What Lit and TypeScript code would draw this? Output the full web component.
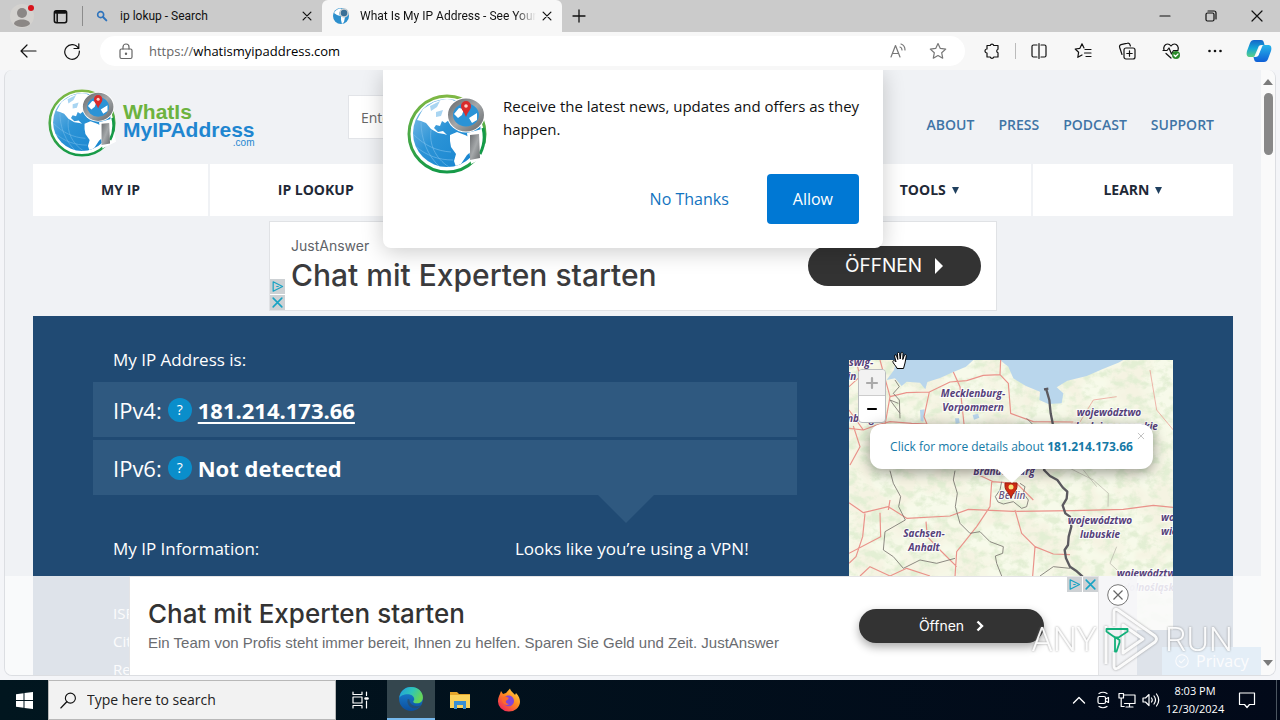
import { LitElement, html, svg, css } from "lit";
import { customElement } from "lit/decorators.js";

const icon = (body: unknown, size = 18, box = 18) =>
  html`<svg class="icon" width=${size} height=${size} viewBox="0 0 ${box} ${box}" aria-hidden="true">${body}</svg>`;

const globe = (size: number) => html`
  <svg class="globe" width=${size} height=${size} viewBox="0 0 80 80" role="img" aria-label="Globe logo">
    <defs>
      <linearGradient id="ring" x1="0" y1="0" x2="0" y2="1">
        <stop offset="0" stop-color="#7fb845" /><stop offset="1" stop-color="#159a48" />
      </linearGradient>
      <linearGradient id="sea" x1="0" y1="0" x2="1" y2="1">
        <stop offset="0" stop-color="#8cc4ea" /><stop offset=".45" stop-color="#2b93d6" /><stop offset="1" stop-color="#1583cf" />
      </linearGradient>
      <linearGradient id="steel" x1="0" y1="0" x2="1" y2="1">
        <stop offset="0" stop-color="#6c6f72" /><stop offset=".5" stop-color="#a5a8aa" /><stop offset="1" stop-color="#6b6e70" />
      </linearGradient>
      <clipPath id="ball"><circle cx="40" cy="39" r="34" /></clipPath>
    </defs>
    <circle cx="40" cy="40" r="38" fill="#fff" stroke="url(#ring)" stroke-width="3" />
    <circle cx="40" cy="39" r="34" fill="url(#sea)" />
    <g clip-path="url(#ball)">
      <path fill="#fff" d="M10 26 16 15 27 8 41 4 50 8 46 16 41 19 42 26 38 29 35 27 33 32 29 31 27 34 31 38 36 37 40 41 37 40 31 39 24 35 19 29 14 27Z" />
      <path fill="#a9d5f2" d="M23 12 33 7 30 13 24 17ZM29 18l7-2-2 6-5 1Z" />
      <path fill="#fff" d="M43 41 50 38 58 41 68 46 66 56 60 61 54 70 49 73 47 67 49 60 44 53 43 47Z" />
      <path fill="none" stroke="#7cc0ec" stroke-width=".6" d="M6 40C18 52 30 57 44 58M8 52C20 62 32 66 46 66M14 28C14 44 20 62 34 74M24 36C22 50 28 64 42 73" />
    </g>
    <path d="M60 39 75 35 80 62 64 70Z" fill="#fff" />
    <path d="M76 34A37 37 0 0 1 73 60" fill="none" stroke="#159a48" stroke-width="3" />
    <path d="M63 41 72 40 73 64 63 66Z" fill="url(#steel)" />
    <ellipse cx="59" cy="21" rx="19" ry="17.500" fill="#fff" />
    <ellipse cx="59" cy="21" rx="15.500" ry="14" fill="#2b93d6" stroke="url(#steel)" stroke-width="5" />
    <path d="M47 20 52 14 57 15 55 21 51 24ZM62 24 70 19 70 26 65 29Z" fill="#fff" />
    <path d="M59 23C57 17 54 16 54 12A5 5 0 0 1 64 12C64 16 61 17 59 23Z" fill="#d92b2b" />
    <circle cx="59" cy="12" r="1.800" fill="#ffd0c8" />
  </svg>`;

const map = html`
  <svg class="tiles" viewBox="0 0 324 270" preserveAspectRatio="xMinYMin slice" aria-label="Map of the Berlin region" role="img">
    <defs>
      <filter id="woods" x="0" y="0" width="100%" height="100%">
        <feTurbulence type="fractalNoise" baseFrequency="0.09 0.11" numOctaves="5" seed="11" />
        <feColorMatrix values="0 0 0 0 .77  0 0 0 0 .86  0 0 0 0 .66  3.600 0 0 0 -1.600" />
      </filter>
      <filter id="fields" x="0" y="0" width="100%" height="100%">
        <feTurbulence type="fractalNoise" baseFrequency="0.03" numOctaves="3" seed="4" />
        <feColorMatrix values="0 0 0 0 .93  0 0 0 0 .96  0 0 0 0 .82  4 0 0 0 -1.500" />
      </filter>
    </defs>
    <rect width="324" height="270" fill="#f5f3e2" />
    <rect width="324" height="270" filter="url(#fields)" />
    <rect width="324" height="270" filter="url(#woods)" />
    <g transform="scale(.33333) translate(-27 -30)" fill="none" stroke-linejoin="round">
      <path fill="#b9d6ec" d="M170 30 162 60 140 90 165 85 185 108 200 95 240 98 256 118 262 96 300 84 340 66 378 50 400 30ZM480 30 505 50 520 85 558 108 600 125 598 150 625 162 665 160 670 130 650 112 682 92 740 78 790 56 835 38 850 30Z" />
      <path fill="#b9d6ec" d="M240 180 254 178 250 215 242 212ZM398 195l16-4 4 12-16 6ZM345 205l12 0 2 14-12 2Z" />
      <g stroke="#ea928a" stroke-width="3.500">
        <path d="M27 110 60 80 48 30M27 235 70 240 110 225 150 215 215 220 260 222M40 228 60 290 30 345M70 240 27 180M120 30 150 140 135 225M150 140 200 128 268 126 330 96 380 92 430 76 480 74 505 100 512 190 580 215 700 216M268 126 252 200 262 225M340 66 360 110 372 222M480 74 482 30" />
        <path d="M27 458 70 488 145 470 200 505 330 498 385 478 520 484 700 482 850 478 940 466 1000 472M75 490 68 560 48 620 27 640M120 488 122 560 27 610M150 450 145 480M455 395 450 470 410 530 350 605 345 680M455 395 530 400 580 450M410 372 460 395M525 480 545 550 585 590 578 678M585 590 640 612 690 614M258 515 262 560 300 600 350 650M60 678 90 650 150 678 200 655 270 678" />
        <path d="M1000 240 950 180 930 60M660 230 720 216 760 150 830 140" stroke-width="2" />
      </g>
      <g stroke="#77746e" stroke-width="2.500">
        <path d="M150 362 160 400 182 440 176 470 196 510 135 545 130 600 160 620 190 655 240 630 290 640 345 625M345 362 340 390 352 430 346 470 360 520 390 550 420 545 450 575 490 590 488 610 466 618 470 640 485 678M165 90 178 110 160 130 178 150 180 205M485 395 480 420 466 440 474 456 490 462 520 455 545 475 560 470 565 450 550 430 555 410 540 400M600 678 640 650 690 655M560 205 590 235M175 160 150 150 180 190" />
        <path d="M680 350 760 390 805 430 804 470M730 360 770 410M850 678 810 640 830 590" stroke="#b5b2a7" stroke-width="2" />
      </g>
      <path stroke="#5c5a60" stroke-width="7" d="M612 118 625 116M618 115 628 150 632 190 638 220 640 300 612 360 630 378 652 390 668 412 682 425 680 446 668 466 676 490 690 500 694 530 686 560 684 585 674 600 678 625 690 650 708 662 728 680" />
    </g>
    <g class="place">
      <text x="0" y="6" text-anchor="start">swig-</text>
      <text x="-32" y="20" text-anchor="start">Holstein</text>
      <text x="-18" y="62" text-anchor="start">Hamburg</text>
      <text x="124" y="37">Mecklenburg-</text><text x="124" y="51">Vorpommern</text>
      <text x="260" y="56">województwo</text><text x="260" y="70">zachodniopomorskie</text>
      <text x="155" y="115">Brandenburg</text>
      <text x="251" y="164">województwo</text><text x="251" y="178">lubuskie</text>
      <text x="75" y="177">Sachsen-</text><text x="75" y="191">Anhalt</text>
      <text x="312" y="161" text-anchor="start">województwo</text><text x="312" y="175" text-anchor="start">wielkopolskie</text>
      <text x="300" y="217">województwo</text><text x="304" y="231">dolnośląskie</text>
      <text x="163" y="139" class="city">Berlin</text>
    </g>
    <path d="M162 138C160 132 156 131 156 126V123H168V126C168 131 164 132 162 138Z" fill="#cf2b12" stroke="#9d1f10" />
    <circle cx="162" cy="127" r="2.500" fill="#f8e27c" />
  </svg>`;

@customElement("app-root")
export class AppRoot extends LitElement {
  static styles = css`
    :host { display: flex; flex-direction: column; height: 100vh; overflow: hidden; background: #f4f5f8; font: 14px/20px "Open Sans", sans-serif; color: #111; }
    * { box-sizing: border-box; }
    button, input { font: inherit; color: inherit; border: 0; margin: 0; padding: 0; background: none; }
    a { color: inherit; text-decoration: none; }
    h1, h2, p { margin: 0; font-weight: 400; }
    svg { display: block; flex: none; }
    .icon { fill: none; stroke: currentColor; stroke-width: 1.200; stroke-linecap: round; stroke-linejoin: round; }
    .center { display: grid; place-items: center; }

    .tabs { display: flex; align-items: stretch; height: 32px; flex: none; background: #cbcbcb; }
    .avatar { width: 44px; }
    .spaces { width: 32px; }
    .rule { width: 1px; background: #8c8c8c; }
    .tabs .rule { margin: 6px 3px 6px 6px; }
    .tab { display: flex; align-items: center; gap: 10px; padding: 0 8px 0 10px; font: 12px/16px Roboto, sans-serif; }
    .tab.idle { width: 236px; gap: 12px; }
    .tab.live { width: 240px; background: #f7f7f7; border-radius: 6px 6px 0 0; }
    .title { flex: 1; overflow: hidden; white-space: nowrap; text-align: left; }
    .live .title { margin-right: -6px; -webkit-mask-image: linear-gradient(90deg, #000 88%, transparent); }
    .plus { width: 34px; }
    .win { width: 46px; }
    .push { margin-left: auto; }

    .bar { display: flex; align-items: center; height: 38px; flex: none; background: #f7f7f7; padding-left: 6px; }
    .tool { width: 44px; height: 32px; flex: none; }
    .tool.last { width: 43px; }
    .bar .rule { height: 16px; background: #bbb; margin: 0 1px; }
    .omni { flex: 1; height: 30px; margin: 0 5px 0 6px; display: flex; align-items: center; background: #fff; border-radius: 15px; padding: 0 18px 0 17px; gap: 14px; color: #666; font-size: 13px; }
    .url { flex: 1; }
    .url b { font-weight: 400; color: #000; }
    .marks { display: flex; gap: 22px; color: #777; }

    .frame { position: relative; flex: 1; min-height: 0; margin: 0 4px 4px 4px; display: flex; border: 1px solid #dcdee2; border-top: 0; border-radius: 8px; overflow: hidden; background: #f0f2f5; }
    .page { position: relative; flex: 1; overflow: hidden; }
    .scroll { width: 14px; background: #fafafa; display: flex; flex-direction: column; align-items: center; padding: 9px 0; color: #7b7b7b; }
    .thumb { width: 9px; height: 62px; border-radius: 5px; background: #888; margin-top: 8px; }
    .down { margin-top: auto; }

    .wrap { max-width: 1200px; margin: 0 auto; }
    .head { display: flex; align-items: center; height: 94px; padding: 0 19px 0 15px; }
    .brand { display: flex; align-items: center; gap: 7px; width: 300px; margin-top: 12px; }
    .word { font: bold 21px/18px "Liberation Sans", sans-serif; color: #1f86d0; padding-top: 4px; }
    .word span { display: block; }
    .word .green { color: #6cb33f; }
    .word .dot { font-size: 10px; line-height: 8px; text-align: right; font-weight: 400; }
    .find { width: 300px; height: 44px; background: #fff; border: 1px solid #e2e4e8; padding: 0 12px; }
    .find::placeholder { color: #666; opacity: 1; }
    .links { margin-left: auto; display: flex; gap: 24px; font-weight: 600; color: #3f74a6; padding-top: 16px; }
    .menu { display: grid; grid-template-columns: 175fr 211fr 402fr 203fr 200fr; gap: 2px; }
    .menu > * { background: #fff; height: 52px; display: flex; align-items: center; justify-content: center; gap: 6px; font-weight: 700; color: #1f2937; }
    .menu svg { color: #20405f; }

    .lead { position: relative; width: 728px; height: 90px; margin: 5px auto; background: #fff; border: 1px solid #e0e2e5; display: flex; align-items: center; justify-content: space-between; padding: 0 15px 0 21px; color: #3c4043; font-family: Inter, sans-serif; }
    .lead p { line-height: 18px; font-size: 14px; color: #5f6368; }
    .lead h2 { font-size: 30px; line-height: 40px; font-weight: 500; color: #3b3b3d; }
    .lead .go { width: 173px; height: 40px; font-size: 19px; gap: 12px; }
    .go { display: flex; align-items: center; justify-content: center; border-radius: 26px; background: #333; color: #fff; }
    .chips { position: absolute; display: flex; gap: 1px; }
    .chips span { width: 15px; height: 15px; background: #cdd1d4; color: #18a3c4; display: grid; place-items: center; }
    .lead .chips { left: 0; bottom: 0; flex-direction: column; }

    .hero { background: #204a73; color: #fff; display: grid; grid-template-columns: 1fr 324px; gap: 52px; padding: 32px 60px 60px; }
    .label { font-size: 17px; line-height: 24px; padding-left: 20px; }
    .rows { position: relative; display: grid; gap: 3px; margin: 10px 0 42px; }
    .row { display: flex; align-items: center; height: 55px; padding-left: 20px; gap: 6px; background: #2f5980; font-size: 22px; line-height: 30px; }
    .row b { font-weight: 700; }
    .row a { text-decoration: underline; text-decoration-thickness: 2px; text-underline-offset: 3px; }
    .tip { width: 24px; height: 24px; border-radius: 50%; background: #0a8ecb; font-size: 14px; line-height: 24px; }
    .notch { position: absolute; left: 505px; top: 100%; color: #2f5980; }
    .cols { display: grid; grid-template-columns: 402px 1fr; }
    .facts { padding: 38px 0 0 20px; font-size: 15px; line-height: 28px; }

    .map { position: relative; height: 270px; margin-top: 12px; }
    .tiles { width: 100%; height: 100%; }
    .place { font: italic 700 10px "Open Sans", sans-serif; fill: #55407a; text-anchor: middle; paint-order: stroke; stroke: #fffc; stroke-width: 2px; }
    .place .city { font-weight: 600; fill: #6a5580; }
    .zoom { position: absolute; left: 9px; top: 9px; width: 28px; border: 1px solid #b9bcbf; border-radius: 4px; background: #fff; overflow: hidden; color: #000; }
    .zoom button { display: grid; width: 26px; height: 26px; place-items: center; }
    .zoom .off { background: #f2f2f2; color: #aaa; border-bottom: 1px solid #ccc; }
    .pop { position: absolute; left: 21px; top: 64px; width: 283px; height: 45px; border-radius: 12px; background: #fff; box-shadow: 0 3px 14px #0006; color: #1579a6; font-size: 12px; line-height: 18px; white-space: nowrap; display: grid; place-items: center; }
    .pop .x { position: absolute; right: 7px; top: 7px; color: #bbb; }
    .pop .beak { position: absolute; left: 127px; top: 100%; color: #fff; }

    .ask { position: absolute; top: 0; left: 50%; transform: translateX(-50%); width: 500px; height: 178px; background: #fff; border-radius: 0 0 8px 8px; box-shadow: 0 4px 22px #0003; padding: 24px 16px 24px 24px; display: grid; grid-template-columns: 80px 1fr; column-gap: 16px; }
    .ask p { font-size: 15px; line-height: 23px; padding-top: 1px; white-space: nowrap; }
    .acts { grid-column: 1 / -1; display: flex; justify-content: flex-end; gap: 12px; padding-right: 8px; font-size: 16px; }
    .acts button { height: 50px; border-radius: 4px; padding: 0 26px; color: #1273c0; }
    .acts .yes { background: #0078d4; color: #fff; }

    .privacy { position: absolute; right: 0; bottom: 0; width: 99px; height: 28px; background: #4c97d8; color: #fff; display: flex; align-items: center; justify-content: center; gap: 6px; font-size: 16px; }
    .dock { position: absolute; inset: auto 0 0 0; height: 99px; display: flex; justify-content: center; background: #fafafbde; }
    .ad { position: relative; width: 970px; background: #fff; border: 1px solid #e4e4e6; border-bottom: 0; padding: 0 54px 0 18px; display: flex; align-items: center; justify-content: space-between; }
    .ad h2 { font: 500 26px/34px Inter, sans-serif; color: #333; }
    .ad p { font: 15px/24px "Liberation Sans", sans-serif; color: #6a6c70; }
    .ad .go { width: 185px; height: 34px; gap: 12px; font: 14px/20px Inter, sans-serif; box-shadow: 0 4px 10px #0005; }
    .ad .chips { right: 0; top: 0; }
    .side { width: 38px; background: #f5f5f7cc; display: flex; flex-direction: column; align-items: center; padding-top: 8px; color: #6a6a6a; }
    .mark { position: absolute; right: 28px; bottom: 2px; display: flex; align-items: center; gap: 4px; font: 300 34px/68px Roboto, sans-serif; color: #fffffff0; filter: drop-shadow(0 0 1px #777b); }
    .sprout { position: absolute; right: 132px; bottom: 22px; }
    .hand { position: absolute; left: 887px; top: 281px; }

    .task { display: flex; height: 40px; flex: none; background: linear-gradient(90deg, #01161f, #020919); color: #fff; }
    .start { width: 48px; }
    .search { width: 288px; display: flex; align-items: center; gap: 10px; padding-left: 11px; background: #f2f2f2; border: 1px solid #b8b8b8; color: #111; }
    .search input { flex: 1; min-width: 0; }
    .search input::placeholder { color: #222; opacity: 1; }
    .app { width: 49px; }
    .app.view { width: 51px; padding-right: 4px; }
    .app.on { width: 48px; background: #34464e; border-bottom: 2px solid #76b9ed; }
    .tray { margin-left: auto; display: flex; align-items: center; }
    .tray button { width: 24px; height: 40px; }
    .clock { width: 64px; text-align: center; font-size: 11px; line-height: 18px; }
    .tray .note { width: 40px; }
    .edge { width: 4px; height: 40px; border-left: 1px solid #4b5560; margin-left: 9px; }
  `;

  private cross = (s = 10) => icon(svg`<path d="M4 4 14 14M14 4 4 14" stroke-width="1.600"/>`, s);

  private tool(label: string, body: unknown, cls = "tool") {
    return html`<button class="${cls} center" aria-label=${label}>${icon(body)}</button>`;
  }

  private caret = html`<svg width="7" height="7" viewBox="0 0 7 7"><path d="M0 0H7L3.500 7Z" fill="currentColor" /></svg>`;

  private chips() {
    return html`<div class="chips"><span>${icon(svg`<path d="M3 2.500 16 9 3 15.500ZM8 9h2" stroke-width="1.700"/>`, 13)}</span><span>${icon(svg`<path d="M3 3 15 15M15 3 3 15" stroke-width="2.200"/>`, 13)}</span></div>`;
  }

  render() {
    return html`
      <header class="tabs">
        <button class="avatar center" aria-label="Profile">
          <svg width="30" height="26" viewBox="0 0 30 26"><circle cx="15" cy="13" r="12" fill="#d4d2cf" /><circle cx="15" cy="10" r="5" fill="#8b8785" /><path d="M7 21C7 15 23 15 23 21 20 25 10 25 7 21Z" fill="#8b8785" /><circle cx="24" cy="5" r="3" fill="#d8131b" /></svg>
        </button>
        <button class="spaces center" aria-label="Workspaces">${icon(svg`<rect x="2.500" y="3" width="13" height="12.500" rx="2" stroke-width="1.600"/><path d="M4 4.500H14" stroke-width="3"/><path d="M5.500 6v9" stroke-width="1.600"/>`, 17)}</button>
        <span class="rule"></span>
        <div class="tab idle">
          ${icon(svg`<g stroke="#2f74bd" stroke-width="2.400"><circle cx="7" cy="7" r="4.500"/><path d="M10.500 10.500 15.500 15.500" stroke-width="3"/></g>`, 12)}
          <button class="title">ip lokup - Search</button>
          <button aria-label="Close tab">${this.cross(14)}</button>
        </div>
        <div class="tab live">
          <svg width="18" height="18" viewBox="0 0 18 18"><circle cx="9" cy="9" r="8" fill="#2c8fcd" /><path d="M2 6C5 1 9 1 10 2L7 6 8 9 5 8ZM9 9l4 1-1 5-2 2-1-4Z" fill="#fff" /><circle cx="12" cy="6" r="4" fill="#3a6f96" stroke="#c9d0d4" stroke-width="1.500" /></svg>
          <button class="title">What Is My IP Address - See Your Public Address</button>
          <button aria-label="Close tab">${this.cross(14)}</button>
        </div>
        <button class="plus center" aria-label="New tab">${icon(svg`<path d="M9 3v12M3 9h12" stroke-width="1.300"/>`)}</button>
        <button class="win push center" aria-label="Minimize">${icon(svg`<path d="M4 9h10"/>`)}</button>
        <button class="win center" aria-label="Restore">${icon(svg`<rect x="4" y="6" width="8" height="8" rx="1.500"/><path d="M6 4h6a2 2 0 0 1 2 2v6"/>`)}</button>
        <button class="win center" aria-label="Close">${icon(svg`<path d="M4 4 14 14M14 4 4 14"/>`)}</button>
      </header>

      <nav class="bar">
        ${this.tool("Back", svg`<path d="M17 9H2M8 3 2 9l6 6"/>`)}
        ${this.tool("Reload", svg`<path d="M15.500 6.500A7.300 7.300 0 1 0 16.300 9M15.800 1.800V6.500H11"/>`)}
        <div class="omni">
          ${icon(svg`<rect x="3" y="7" width="12" height="9.500" rx="1.500"/><path d="M6 7V5a3 3 0 0 1 6 0v2"/><circle cx="9" cy="11.700" r=".6" fill="currentColor"/>`)}
          <span class="url">https://<b>whatismyipaddress.com</b></span>
          <span class="marks">
            ${icon(svg`<path d="M2 15 6.500 3.500 11 15M3.500 11.500h6M11 5c1.500.5 2 1.500 2 3M12 2c3 1 4 3 4 6"/>`)}
            ${icon(svg`<path d="M9 1.500 11.300 6.400 16.700 7.100 12.700 10.800 13.700 16.200 9 13.500 4.300 16.200 5.300 10.800 1.300 7.100 6.700 6.400Z"/>`)}
          </span>
        </div>
        ${this.tool("Extensions", svg`<path d="M4 3.500H7.200a1.900 1.900 0 0 1 3.600 0H15V7.200a1.900 1.900 0 0 0 0 3.600V15H10.800a1.900 1.900 0 0 1-3.600 0H4V11a2 2 0 0 1 0-4Z"/>`)}
        <span class="rule"></span>
        ${this.tool("Split screen", svg`<path d="M7 3H3.500A1.500 1.500 0 0 0 2 4.500v9A1.500 1.500 0 0 0 3.500 15H7M11 3h3.500A1.500 1.500 0 0 1 16 4.500v9a1.500 1.500 0 0 1-1.500 1.500H11M9 1.500v15"/>`)}
        ${this.tool("Favorites", svg`<path d="M10 6 8 1.800 5.900 6.300 1.200 7 4.600 10.300 3.800 15.300 8 13M11 7.500h6M10.500 11h6.500M12 14.500h5"/>`)}
        ${this.tool("Collections", svg`<rect x="6" y="6" width="11" height="11" rx="2"/><path d="M11.500 8.800v5.400M8.800 11.500h5.400M4 12.500 1.600 5.200A2 2 0 0 1 3 2.700L9.500 1.200A2 2 0 0 1 12 2.700L12.400 4"/>`)}
        ${this.tool("Browser essentials", svg`<path d="M2 8C1 5 3 2 5.500 2 7.500 2 9 4 9 4s1.500-2 3.500-2C15 2 17 5 16 8M1 8.500H5L7 6l2.500 6 2-3.500H16M4 11.500 9 16"/><circle cx="14" cy="13" r="4" fill="#2a8a2a" stroke="none"/><path d="m12 13 1.500 1.500L16 12" stroke="#fff"/>`)}
        ${this.tool("More", svg`<g fill="currentColor" stroke="none"><circle cx="3.500" cy="9" r="1.300"/><circle cx="9" cy="9" r="1.300"/><circle cx="14.500" cy="9" r="1.300"/></g>`)}
        <button class="tool last center" aria-label="Copilot">
          <svg width="26" height="24" viewBox="0 0 26 24">
            <defs><linearGradient id="ca" x1="0" y1="0" x2="0" y2="1"><stop offset="0" stop-color="#1565c9" /><stop offset=".5" stop-color="#16a7d6" /><stop offset="1" stop-color="#5ccf85" /></linearGradient><linearGradient id="cb" x1="0" y1="0" x2="0" y2="1"><stop offset="0" stop-color="#27b5ea" /><stop offset="1" stop-color="#0f5fd6" /></linearGradient></defs>
            <path d="M8 1h7c2 0 2.500 1 3 3l.5 2h-3c-2 0-3 1-3.500 3L9 16c-.5 2-1.500 2-3 2H4c-3 0-4-2-3-6L4 4c.8-2 2-3 4-3Z" fill="url(#ca)" />
            <path d="M18 23h-7c-2 0-2.500-1-3-3l-.5-2h2c2 0 3-1 3.500-3l3-7c.5-2 1.500-2 3-2H22c3 0 4 2 3 6l-3 8c-.8 2-2 3-4 3Z" fill="url(#cb)" />
            <path d="M11 15 13.500 8.500C14 7.500 14.500 7 15.500 7L13 14.500C12.500 16 12 17 10.500 17Z" fill="#fff" />
          </svg>
        </button>
      </nav>

      <main class="frame">
        <div class="page">
          <div class="wrap">
            <div class="head">
              <a class="brand" href="#">${globe(68)}<span class="word"><span class="green">WhatIs</span><span>MyIPAddress</span><span class="dot">.com</span></span></a>
              <input class="find" type="text" aria-label="Search" placeholder="Enter Keywords or IP Address..." />
              <div class="links"><a href="#">ABOUT</a><a href="#">PRESS</a><a href="#">PODCAST</a><a href="#">SUPPORT</a></div>
            </div>
            <nav class="menu"><a href="#">MY IP</a><a href="#">IP LOOKUP</a><span></span><a href="#">TOOLS ${this.caret}</a><a href="#">LEARN ${this.caret}</a></nav>
            <section class="lead">
              <div><p>JustAnswer</p><h2>Chat mit Experten starten</h2></div>
              <button class="go">ÖFFNEN <svg width="10" height="16" viewBox="0 0 10 16"><path d="M1 0 9 8 1 16Z" fill="#fff" /></svg></button>
              ${this.chips()}
            </section>
            <section class="hero">
              <div>
                <p class="label">My IP Address is:</p>
                <div class="rows">
                  <div class="row">IPv4: <button class="tip" aria-label="About IPv4">?</button> <b><a href="#">181.214.173.66</a></b></div>
                  <div class="row">IPv6: <button class="tip" aria-label="About IPv6">?</button> <b>Not detected</b></div>
                  <svg class="notch" width="56" height="28" viewBox="0 0 56 28"><path d="M0 0H56L28 28Z" fill="currentColor" /></svg>
                </div>
                <div class="cols"><p class="label">My IP Information:</p><p class="label">Looks like you’re using a VPN!</p></div>
                <div class="facts"><div>ISP:</div><div>City:</div><div>Region:</div></div>
              </div>
              <div class="map">
                ${map}
                <div class="zoom"><button class="off" aria-label="Zoom in">${icon(svg`<path d="M9 4v10M4 9h10" stroke-width="2.200"/>`)}</button><button aria-label="Zoom out">${icon(svg`<path d="M5 9h8" stroke-width="2.200"/>`)}</button></div>
                <div class="pop"><a href="#">Click for more details about <b>181.214.173.66</b></a><button class="x" aria-label="Close popup">${this.cross(10)}</button><svg class="beak" width="30" height="14" viewBox="0 0 30 14"><path d="M0 0H30L15 14Z" fill="currentColor" /></svg></div>
              </div>
            </section>
          </div>

          <button class="privacy">${icon(svg`<circle cx="9" cy="9" r="7"/><path d="m6 9 2 2 4-4"/>`, 16)}Privacy</button>
          <aside class="dock">
            <div class="ad">
              <div><h2>Chat mit Experten starten</h2><p>Ein Team von Profis steht immer bereit, Ihnen zu helfen. Sparen Sie Geld und Zeit. JustAnswer</p></div>
              <button class="go">Öffnen <svg width="8" height="12" viewBox="0 0 8 12"><path d="M1.500 1.500 6 6 1.500 10.500" fill="none" stroke="#fff" stroke-width="2.400" /></svg></button>
              ${this.chips()}
            </div>
            <div class="side">
              <button aria-label="Close ad"><svg width="22" height="22" viewBox="0 0 22 22"><circle cx="11" cy="11" r="10.300" fill="#fff" stroke="#777" /><path d="M6.500 6.500 15.500 15.500M15.500 6.500 6.500 15.500" stroke="#666" stroke-width="1.200" /></svg></button>
            </div>
          </aside>
          <div class="mark"><span>ANY</span><svg width="60" height="66" viewBox="4 0 60 66"><path d="M17 20V6Q17 2 21 4L58 30Q61 33 58 36L21 62Q17 64 17 60V46M9 20V58M26 19 46 33 26 47Z" fill="none" stroke="#fffffff0" stroke-width="3" stroke-linejoin="round" /></svg><span>RUN</span></div>
          <svg class="sprout" width="24" height="26" viewBox="0 0 24 26"><path d="M1.500 2H22.500V4.500L13.500 10.500H10L1.500 4.500ZM10 10.500V24.500H11.500L14.500 15.500V13L9 9.500" fill="none" stroke="#12b07a" stroke-width="1.800" stroke-linejoin="round" /></svg>

          <section class="ask" role="dialog" aria-label="Notifications">
            ${globe(80)}
            <p>Receive the latest news, updates and offers as they<br />happen.</p>
            <div class="acts"><button>No Thanks</button><button class="yes">Allow</button></div>
          </section>
          <svg class="hand" width="17" height="19" viewBox="0 0 17 19"><path d="M5 17C3 14 1 12 .8 10.500 1 9 3 9.500 4 11L2.500 5C2.500 3.500 4.200 3.500 4.600 5L5.800 8.500 5.500 2.500C5.600 1 7.400 1 7.600 2.500L8.200 8 9 2C9.300.8 11 1 11 2.500L10.800 8.500 12.500 4C13 3 14.500 3.500 14.300 5L13 12 11.500 17.500H5Z" fill="#fff" stroke="#000" /></svg>
        </div>
        <div class="scroll">
          <svg width="10" height="6" viewBox="0 0 10 6"><path d="M5 0 10 6H0Z" fill="currentColor" /></svg>
          <div class="thumb"></div>
          <svg class="down" width="10" height="6" viewBox="0 0 10 6"><path d="M5 6 10 0H0Z" fill="currentColor" /></svg>
        </div>
      </main>

      <footer class="task">
        <button class="start center" aria-label="Start"><svg width="17" height="17" viewBox="0 0 17 17"><path d="M0 2.300 7.500 1.200V8H0ZM8.500 1 17 0V8H8.500ZM0 9H7.500V15.800L0 14.700ZM8.500 9H17V17L8.500 16Z" fill="#fff" /></svg></button>
        <label class="search">${icon(svg`<circle cx="11" cy="6.500" r="5.300"/><path d="M7.200 10.300 1 16.800" stroke-width="1.500"/>`, 17)}<input type="text" placeholder="Type here to search" aria-label="Type here to search" /></label>
        <button class="app view center" aria-label="Task view">${icon(svg`<path d="M2 1v2.500H11V1M2 17v-2.500H11V17M15.500 1v3.500M15.500 10v7M2 6H11v6H2Z"/><path d="M14.500 7.500h2" stroke-width="2.500"/>`, 18)}</button>
        <button class="app on center" aria-label="Edge">
          <svg width="26" height="26" viewBox="0 0 24 24"><defs><linearGradient id="eg" x1="0" y1="0" x2="1" y2=".4"><stop offset="0" stop-color="#1f9de0" /><stop offset=".55" stop-color="#2fc5b8" /><stop offset="1" stop-color="#66d558" /></linearGradient><linearGradient id="eb" x1="0" y1="0" x2="0" y2="1"><stop offset="0" stop-color="#1b86d6" /><stop offset="1" stop-color="#0c4f9e" /></linearGradient></defs>
            <circle cx="12" cy="12" r="11" fill="url(#eb)" /><path d="M1.200 11C2 5 6.500 1 12 1 18.500 1 23 5.500 23 10.500 23 14 20.500 16 17.500 16 15.500 16 14 15.300 14 14.500 14 14 15 13.500 15 12 15 9.500 12.500 7.500 9 7.500 5 7.500 2 9 1.200 11Z" fill="url(#eg)" /><path d="M9 12C7.500 17 11.500 21.500 17.500 20.500 19.500 20 21.300 18.300 21 18 17 19.500 11 18.500 10.500 12.500Z" fill="#34464e" opacity=".55" /></svg>
        </button>
        <button class="app center" aria-label="File Explorer"><svg width="22" height="20" viewBox="0 0 22 20"><path d="M1 2H8L10 4H21V18H1Z" fill="#e5a52a" /><path d="M1 5H21V18H1Z" fill="#fbd25c" /><path d="M5 11H17V19H14V15H8V19H5Z" fill="#3a8fd4" /></svg></button>
        <button class="app center" aria-label="Firefox"><svg width="24" height="24" viewBox="0 0 24 24"><defs><linearGradient id="ff" x1="1" y1="0" x2=".2" y2="1"><stop offset="0" stop-color="#ffe14a" /><stop offset=".5" stop-color="#ff8a1f" /><stop offset="1" stop-color="#f0235c" /></linearGradient></defs><path d="M3 6 4 3 6 6 9 5 13 0.500C14 4 17 5 18 7L19 5C22 8 23 11 23 14A11 10 0 0 1 1 13C1 10 2 8 3 6Z" fill="url(#ff)" /><path d="M8 9C11 6 17 8 17 13 17 17 13 19 10 18 7 17 6 14 7 12L11 12Z" fill="#8245d6" /><path d="M5 9 9 8.500 12 10 9.500 12.500C8 13 9 16 12 16 9 19 4 15 5 9Z" fill="#ff6a2b" /></svg></button>
        <div class="tray">
          <button class="center" aria-label="Show hidden icons">${icon(svg`<path d="M3.500 12 9 6.500 14.500 12" stroke-width="1.400"/>`)}</button>
          <button class="center" aria-label="Meet now">${icon(svg`<rect x="4" y="5.500" width="7.500" height="7" rx="1.500"/><path d="M11.500 8 14.500 6.500v5L11.500 10M5 2.500Q9 0 13 2.500M5 15.500Q9 18 13 15.500"/>`)}</button>
          <button class="center" aria-label="Network">${icon(svg`<path d="M6 4H17v8.500H6.500M11.500 12.500V16M8 16h7M1 2.500H5.500V7H1ZM3.200 7v8.500h3"/>`)}</button>
          <button class="center" aria-label="Volume">${icon(svg`<path d="M1 7v4H3.500L7 14.500V3.500L3.500 7ZM9.500 7q1.500 2 0 4M12 5q3 4 0 8M14.500 3q4.500 6 0 12"/>`)}</button>
          <div class="clock">8:03 PM<br />12/30/2024</div>
          <button class="note center" aria-label="Notifications">${icon(svg`<path d="M1.500 2H16.500V13.500H11.500L9 16.500 6.500 13.500H1.500Z"/>`)}</button>
          <span class="edge"></span>
        </div>
      </footer>`;
  }
}
